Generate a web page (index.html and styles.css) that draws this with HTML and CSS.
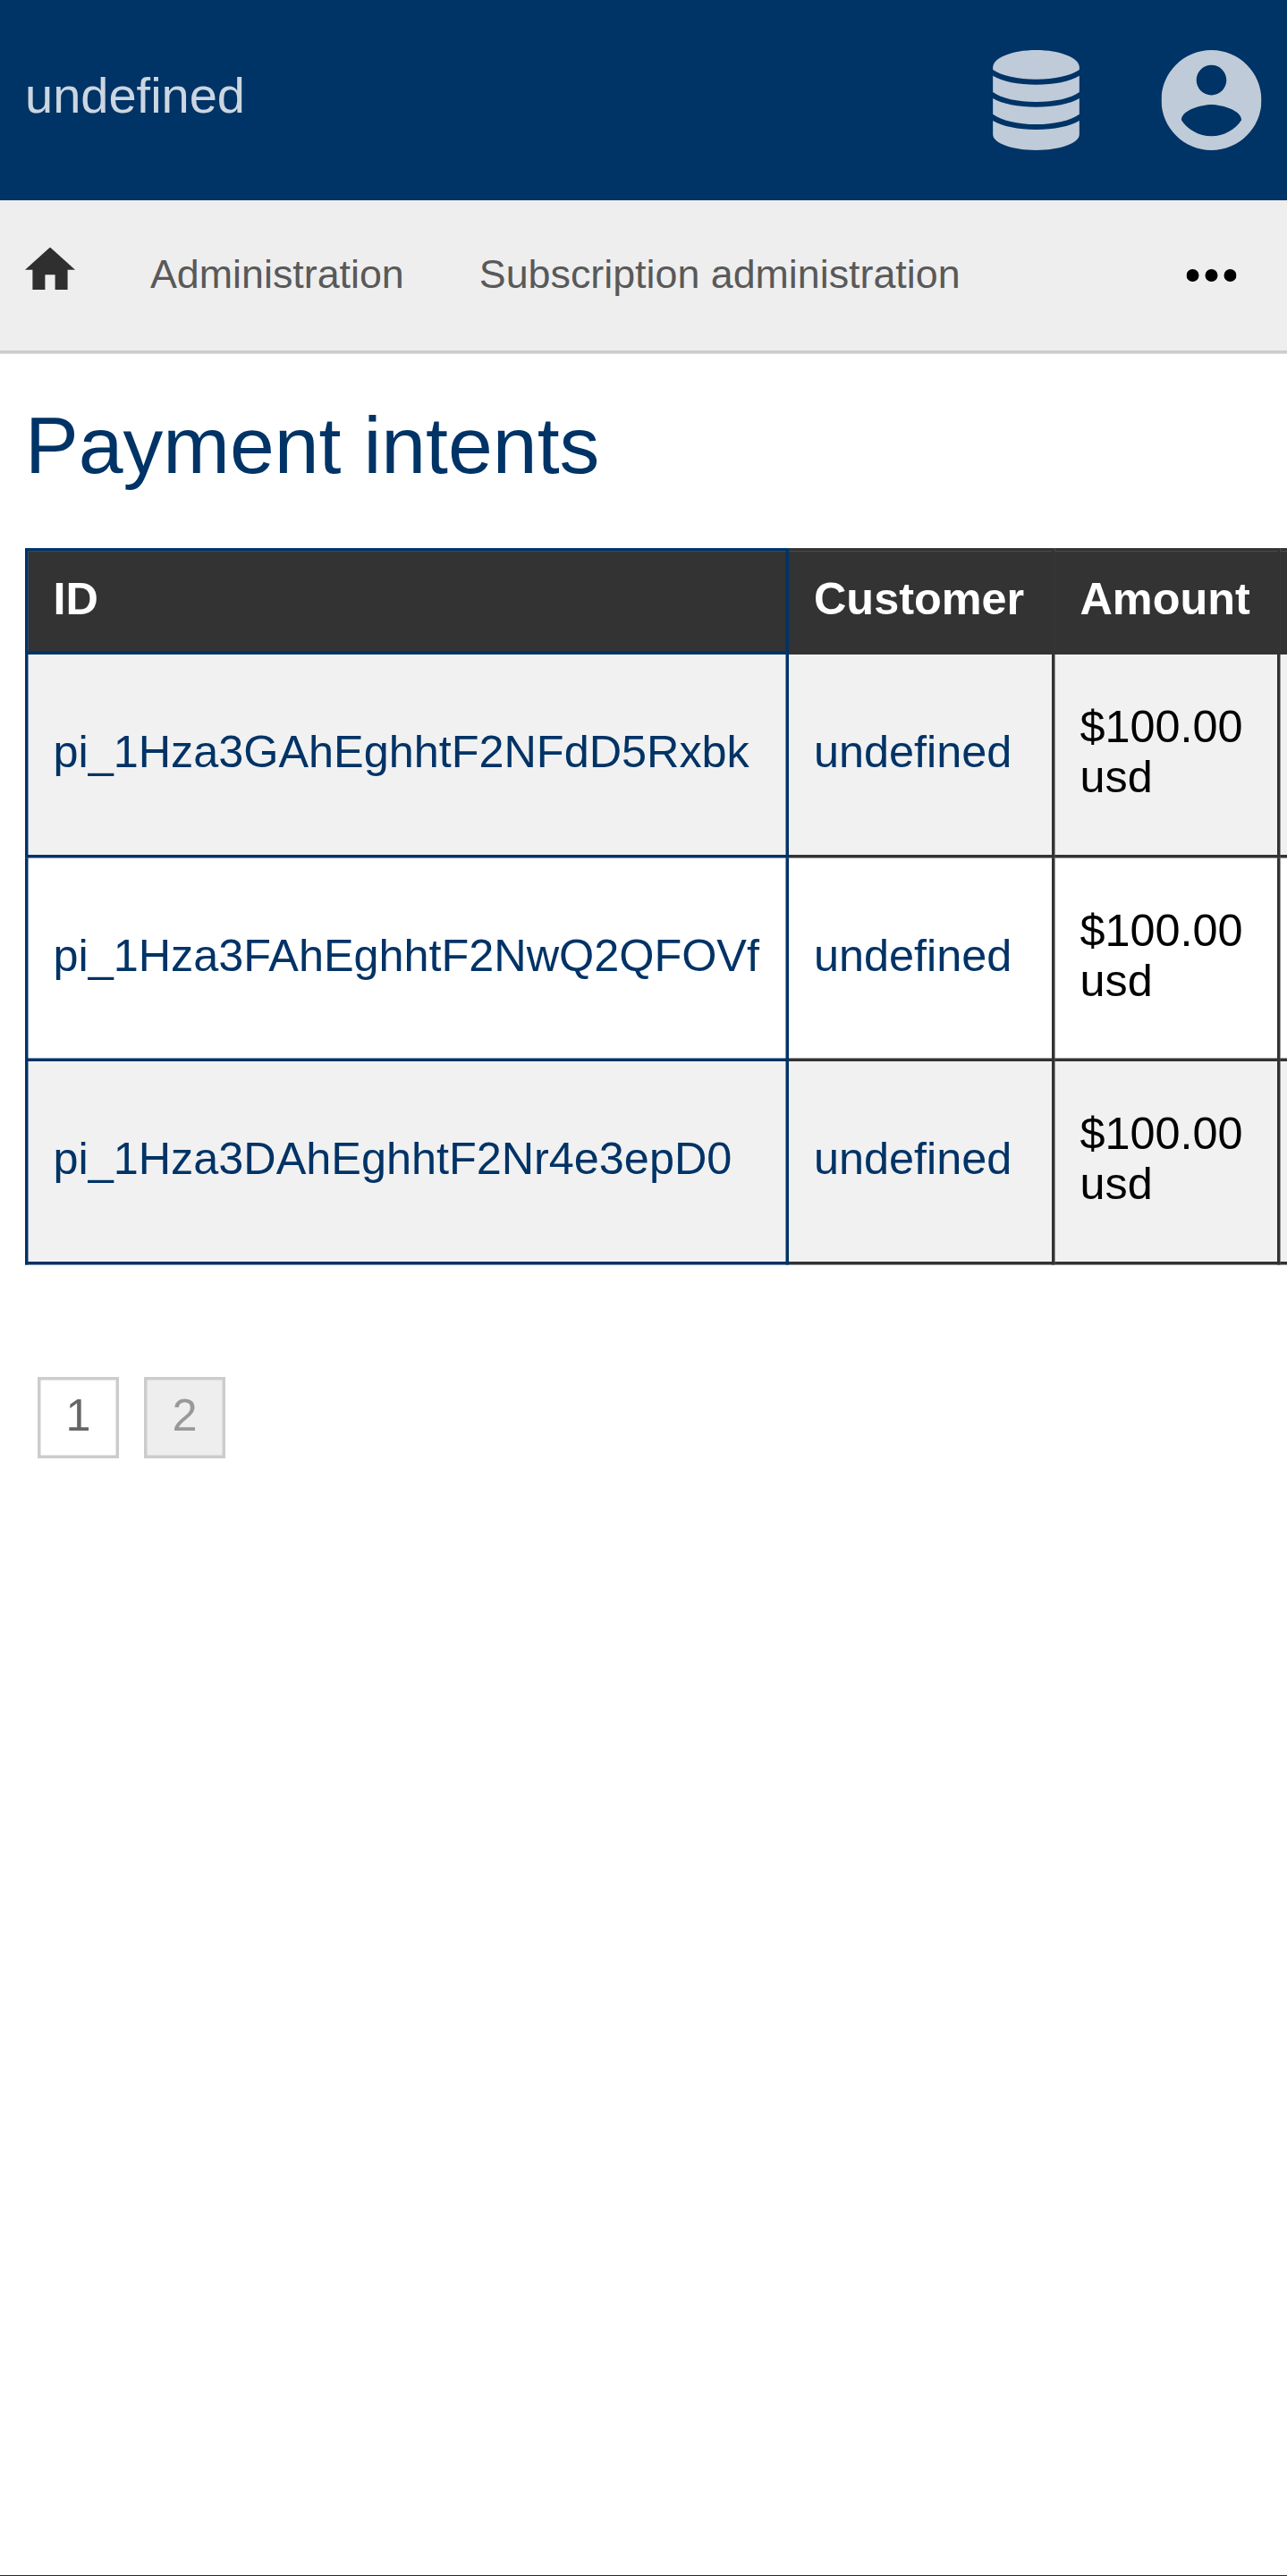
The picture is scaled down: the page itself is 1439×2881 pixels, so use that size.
FILE: index.html
```
<!DOCTYPE html>
<html lang="en">
<head>
<meta charset="utf-8">
<title>Payment intents</title>
<link rel="stylesheet" href="styles.css">
</head>
<body>
<div class="app">
  <header class="header">
    <span class="brand">undefined</span>
    <div class="menus">
      <svg class="menu-icon" viewBox="0 0 336 336" aria-label="Administrator menu">
        <path d="M23 58C23 26 88 0 168 0s145 26 145 58v8c-28 20-83 32-145 32S51 86 23 66z"/>
        <path d="M23 86c32 19 85 30 145 30s113-11 145-30v55c-29 21-83 33-145 33S52 162 23 141z"/>
        <path d="M23 162c32 19 85 29 145 29s113-10 145-29v53c-29 21-83 34-145 34S52 236 23 215z"/>
        <path d="M23 237c32 19 85 30 145 30s113-11 145-30v46c0 30-65 53-145 53S23 313 23 283z"/>
      </svg>
      <svg class="menu-icon" viewBox="2 2 20 20" aria-label="Account menu">
        <path d="M12 2C6.48 2 2 6.48 2 12s4.48 10 10 10 10-4.48 10-10S17.52 2 12 2zm0 3c1.66 0 3 1.34 3 3s-1.34 3-3 3-3-1.34-3-3 1.34-3 3-3zm0 14.2c-2.5 0-4.71-1.28-6-3.22.03-1.99 4-3.08 6-3.08 1.99 0 5.97 1.09 6 3.08-1.29 1.94-3.5 3.22-6 3.22z"/>
      </svg>
    </div>
  </header>
  <nav class="nav">
    <svg class="home" viewBox="2 3 20 17" aria-label="Home"><path d="M10 20v-6h4v6h5v-8h3L12 3 2 12h3v8z"/></svg>
    <a class="nav-link">Administration</a>
    <a class="nav-link">Subscription administration</a>
    <svg class="more" viewBox="0 0 16 4" aria-label="More"><circle cx="2" cy="2" r="2"/><circle cx="8" cy="2" r="2"/><circle cx="14" cy="2" r="2"/></svg>
  </nav>
  <main class="content">
    <h1 class="title">Payment intents</h1>
    <table class="list">
      <colgroup><col class="col-id"><col class="col-customer"><col class="col-amount"><col></colgroup>
      <thead>
        <tr><th>ID</th><th>Customer</th><th>Amount</th><th></th></tr>
      </thead>
      <tbody>
        <tr><td><a>pi_1Hza3GAhEghhtF2NFdD5Rxbk</a></td><td><a>undefined</a></td><td>$100.00 usd</td><td></td></tr>
        <tr><td><a>pi_1Hza3FAhEghhtF2NwQ2QFOVf</a></td><td><a>undefined</a></td><td>$100.00 usd</td><td></td></tr>
        <tr><td><a>pi_1Hza3DAhEghhtF2Nr4e3epD0</a></td><td><a>undefined</a></td><td>$100.00 usd</td><td></td></tr>
      </tbody>
    </table>
    <div class="pages">
      <a class="page">1</a>
      <a class="page page-current">2</a>
    </div>
  </main>
</div>
</body>
</html>
```
FILE: styles.css
```
* { box-sizing: border-box; }

html { background: #fff; }

body {
  width: 1439px;
  height: 2881px;
  margin: 0;
  overflow: hidden;
  border-bottom: 1px solid #003366;
  font-family: "Liberation Sans", Arial, sans-serif;
}

/* Phone-sized layout, enlarged for a 3.5x screen */
.app {
  width: 412px;
  height: 822.8px;
  overflow: hidden;
  transform: scale(3.5);
  transform-origin: 0 0;
}

.header {
  display: flex;
  align-items: center;
  justify-content: space-between;
  height: 64px;
  padding: 0 9px 0 8px;
  background: #003366;
}

.brand {
  font-size: 16px;
  line-height: 18px;
  padding-bottom: 3px;
  color: rgba(255, 255, 255, 0.8);
}

.menus {
  display: flex;
  gap: 24px;
}

.menu-icon {
  width: 32px;
  height: 32px;
  fill: rgba(255, 255, 255, 0.75);
}

.nav {
  display: flex;
  align-items: center;
  gap: 24px;
  height: 49px;
  padding: 0 17px 0 8px;
  background: #eee;
  border-bottom: 1px solid #ccc;
}

.home {
  width: 16px;
  height: 13.6px;
  margin-bottom: 4px;
  fill: #2f2f2f;
}

.nav-link {
  font-size: 12.8px;
  line-height: 16px;
  white-space: nowrap;
  color: #595959;
}

.more {
  width: 16px;
  height: 4px;
  margin-left: auto;
}

.content { padding: 15px 8px; }

.title {
  margin: 0 0 18px;
  font-size: 25.6px;
  font-weight: 400;
  line-height: 29px;
  color: #003366;
}

.list {
  width: 500px;
  table-layout: fixed;
  border-collapse: collapse;
  font-size: 14.4px;
  line-height: 16px;
  transform: translateY(0.143px);
}

.col-id { width: 243px; }
.col-customer { width: 85px; }
.col-amount { width: 72px; }

.list th,
.list td {
  border: 1px solid #333;
  padding: 7px 8px 9px;
  text-align: left;
}

.list th {
  height: 33px;
  color: #fff;
}

.list thead tr,
.list th { background: #333; }

.list td { height: 65px; }

.list th:first-child,
.list td:first-child { border-color: #003366; }

.list tbody tr:nth-child(odd) { background: #f1f1f1; }

.list a { color: #003366; }

.pages {
  display: flex;
  gap: 8px;
  padding: 36px 4px;
}

.page {
  width: 26px;
  height: 26px;
  border: 1px solid #ccc;
  font-size: 14.4px;
  line-height: 22px;
  text-align: center;
  color: #666;
}

.page-current {
  background: #eee;
  color: #999;
}
```
